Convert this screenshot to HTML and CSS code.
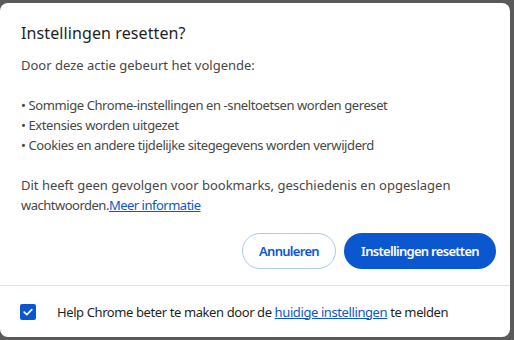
FILE: index.html
```html
<!DOCTYPE html>
<html lang="nl">
<head>
<meta charset="utf-8">
<link rel="stylesheet" href="styles.css">
</head>
<body>
<div class="dialog">
  <div class="main">
    <h1 class="title">Instellingen resetten?</h1>
    <div class="body">
      <p class="line">Door deze actie gebeurt het volgende:</p>
      <ul class="list">
        <li>• Sommige Chrome-instellingen en -sneltoetsen worden gereset</li>
        <li>• Extensies worden uitgezet</li>
        <li>• Cookies en andere tijdelijke sitegegevens worden verwijderd</li>
      </ul>
      <p class="line">Dit heeft geen gevolgen voor bookmarks, geschiedenis en opgeslagen <span class="tight">wachtwoorden.<a class="link" href="#">Meer informatie</a></span></p>
    </div>
    <div class="actions">
      <button class="btn btn-outline">Annuleren</button>
      <button class="btn btn-primary">Instellingen resetten</button>
    </div>
  </div>
  <div class="footer">
    <span class="checkbox">
      <svg width="16" height="16" viewBox="0 0 16 16"><path d="M4.2 8.2 L6.8 10.6 L11.8 5.6" fill="none" stroke="#fff" stroke-width="1.7" stroke-linecap="round" stroke-linejoin="round"/></svg>
    </span>
    <span class="footer-text">Help Chrome beter te maken door de <a class="link" href="#">huidige instellingen</a> te melden</span>
  </div>
</div>
</body>
</html>
```
FILE: styles.css
```css
html, body {
  margin: 0;
  padding: 0;
  background: #5a5a5a;
}
body {
  padding-top: 3px;
  height: 337px;
  overflow: hidden;
  font-family: "Noto Sans", sans-serif;
}
.dialog {
  width: 510px;
  height: 334px;
  background: #fff;
  border-radius: 8px;
  display: flex;
  flex-direction: column;
  box-sizing: border-box;
}
.main {
  padding: 18px 14px 16px 21px;
  border-bottom: 1px solid #e3e3e3;
}
.title {
  margin: 0 0 10px 0;
  font-size: 16px;
  line-height: 24px;
  font-weight: 400;
  letter-spacing: 0.1px;
  color: #1f1f1f;
}
.body {
  font-size: 13px;
  line-height: 20px;
  color: #474747;
}
.line {
  margin: 0;
}
.list {
  list-style: none;
  margin: 20px 0;
  padding: 0;
  letter-spacing: -0.4px;
}
.tight {
  letter-spacing: -0.5px;
}
.link {
  color: #0b57d0;
  text-decoration: underline;
}
.actions {
  display: flex;
  justify-content: flex-end;
  gap: 8px;
  margin-top: 18px;
}
.btn {
  font-family: "Noto Sans", sans-serif;
  font-size: 13px;
  font-weight: 600;
  letter-spacing: -0.7px;
  height: 36px;
  border-radius: 18px;
  padding: 0;
  white-space: nowrap;
  cursor: pointer;
}
.btn-outline {
  background: #fff;
  color: #0b57d0;
  border: 1px solid #a8c7fa;
  width: 94px;
}
.btn-primary {
  background: #0b57d0;
  color: #fff;
  border: none;
  width: 152px;
}
.footer {
  flex: 1;
  display: flex;
  align-items: center;
  padding-left: 20px;
  gap: 21px;
  font-size: 13px;
  letter-spacing: -0.4px;
  color: #1f1f1f;
}
.checkbox {
  width: 16px;
  height: 16px;
  border-radius: 2px;
  background: #0b57d0;
  display: block;
}
.checkbox svg {
  display: block;
}
```
